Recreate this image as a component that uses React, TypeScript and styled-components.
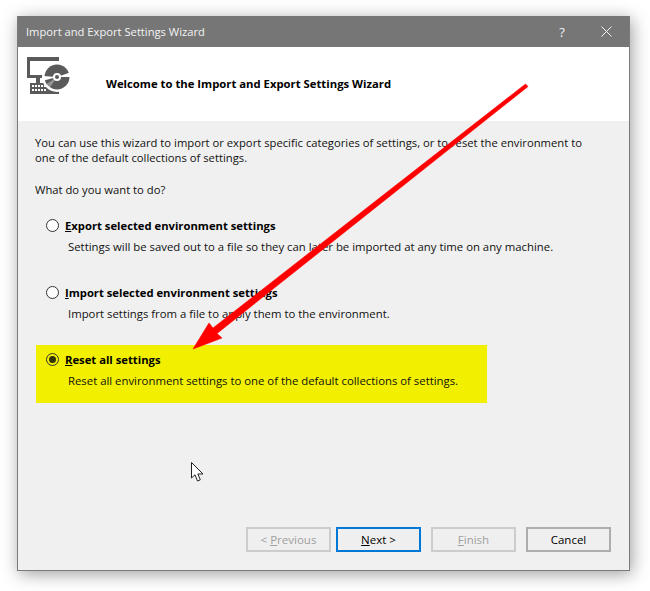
import styled, { createGlobalStyle } from "styled-components";

const GlobalStyle = createGlobalStyle`
  html, body {
    margin: 0;
    padding: 0;
    background: #ffffff;
  }
  body {
    font-family: "Open Sans", "Noto Sans", sans-serif;
    font-size: 11.25px;
    color: #111111;
  }
`;

const Page = styled.div`
  position: relative;
  width: 650px;
  height: 591px;
  padding: 16px 20px 20px 17px;
  box-sizing: border-box;
  overflow: hidden;
`;

const Window = styled.div`
  display: flex;
  flex-direction: column;
  height: 100%;
  box-sizing: border-box;
  border: 1px solid #7a7a7a;
  border-top: 0;
  background: #f0f0f0;
  box-shadow: 2px 3px 16px rgba(0, 0, 0, 0.38);
`;

const TitleBar = styled.div`
  display: flex;
  align-items: center;
  height: 31px;
  flex: none;
  padding: 0 17px 0 8px;
  background: #767676;
  color: #f4f4f4;
  font-size: 11.2px;
`;

const TitleText = styled.span`
  flex: 1;
`;

const HelpGlyph = styled.span`
  width: 12px;
  margin-right: 33px;
  font-size: 13px;
  text-align: center;
`;

const Header = styled.div`
  display: flex;
  align-items: flex-start;
  height: 74px;
  flex: none;
  padding: 10px 0 0 9px;
  box-sizing: border-box;
  background: #ffffff;
`;

const HeaderTitle = styled.h1`
  margin: 19px 0 0 35px;
  font-size: 11.3px;
  font-weight: 700;
  color: #000000;
`;

const Body = styled.div`
  display: flex;
  flex-direction: column;
  flex: 1;
  padding: 14px 18px 0 17px;
`;

const Paragraph = styled.p`
  margin: 0;
  line-height: 15px;
`;

const Question = styled(Paragraph)`
  margin: 17px 0 21px;
`;

const OptionList = styled.div`
  display: flex;
  flex-direction: column;
  gap: 30px;
  width: 451px;
`;

const Option = styled.div<{ $highlight?: boolean }>`
  display: grid;
  grid-template-columns: 13px 1fr;
  align-content: start;
  column-gap: 6px;
  row-gap: 5px;
  height: ${(p) => (p.$highlight ? "58px" : "auto")};
  box-sizing: border-box;
  margin: ${(p) => (p.$highlight ? "-7px -1px 0 1px" : "0 0 0 11px")};
  padding: ${(p) => (p.$highlight ? "7px 0 0 10px" : "0")};
  background: ${(p) => (p.$highlight ? "#f2f000" : "transparent")};
`;

const Radio = styled.span<{ $checked?: boolean; $tint?: boolean }>`
  display: flex;
  align-items: center;
  justify-content: center;
  width: 13px;
  height: 13px;
  margin-top: 1px;
  box-sizing: border-box;
  border: 1px solid #333333;
  border-radius: 50%;
  background: ${(p) => (p.$tint ? "transparent" : "#ffffff")};

  &::after {
    content: "";
    display: ${(p) => (p.$checked ? "block" : "none")};
    width: 7px;
    height: 7px;
    border-radius: 50%;
    background: #333300;
  }
`;

const OptionLabel = styled.label`
  font-weight: 700;
  line-height: 16px;
  color: #000000;
`;

const OptionText = styled.div`
  grid-column: 2;
  padding-left: 3px;
  font-size: 11.35px;
  line-height: 16px;
  white-space: nowrap;
`;

const Footer = styled.div`
  display: flex;
  justify-content: flex-end;
  flex: none;
  padding: 0 18px 18px 0;
`;

const WizardButton = styled.button<{ $focused?: boolean; $gap?: number }>`
  width: 85px;
  height: 25px;
  margin-left: ${(p) => p.$gap ?? 0}px;
  padding: 0;
  box-sizing: border-box;
  border: ${(p) => (p.$focused ? "2px solid #0078d7" : "2px solid #cccccc")};
  background: #efefef;
  font-family: inherit;
  font-size: 11.5px;
  color: #000000;

  &:disabled {
    color: #a0a0a0;
  }
`;

const CancelButton = styled(WizardButton)`
  border: 2px solid #adadad;
`;

const Arrow = styled.svg`
  position: absolute;
  left: 0;
  top: 0;
  pointer-events: none;
`;

const Cursor = styled.svg`
  position: absolute;
  left: 191px;
  top: 462px;
`;

const WizardIcon = () => (
  <svg width="44" height="38" viewBox="0 0 44 38">
    <path d="M0 0H32V4H3V18H22V21H0Z" fill="#5a5a5a" />
    <path d="M9 21H13V26H9Z" fill="#5a5a5a" />
    <path d="M3 26H32V37H3Z" fill="#5a5a5a" />
    <path
      d="M5 28h2v2H5zM8 28h2v2H8zM11 28h2v2h-2zM14 28h2v2h-2zM17 28h2v2h-2zM5 32h2v2H5zM8 32h2v2H8zM11 32h2v2h-2zM14 32h2v2h-2zM17 32h2v2h-2z"
      fill="#ffffff"
    />
    <circle cx="30" cy="20" r="15" fill="#ffffff" />
    <circle cx="30" cy="20" r="12.5" fill="#5a5a5a" />
    <path d="M30 20L16 19 17 23.5ZM30 20L44 20 43 15.5Z" fill="#ffffff" />
    <path d="M30 20L18 28 22 32Z" fill="#ffffff" opacity="0.35" />
    <circle cx="30" cy="20" r="4" fill="#ffffff" />
    <circle cx="30" cy="20" r="2" fill="#5a5a5a" />
  </svg>
);

export default function App() {
  return (
    <>
      <GlobalStyle />
      <Page>
        <Window>
          <TitleBar>
            <TitleText>Import and Export Settings Wizard</TitleText>
            <HelpGlyph>?</HelpGlyph>
            <svg width="11" height="11" viewBox="0 0 11 11">
              <path d="M0.5 0.5L10.5 10.5M10.5 0.5L0.5 10.5" stroke="#f4f4f4" strokeWidth="1" />
            </svg>
          </TitleBar>

          <Header>
            <WizardIcon />
            <HeaderTitle>Welcome to the Import and Export Settings Wizard</HeaderTitle>
          </Header>

          <Body>
            <Paragraph>
              You can use this wizard to import or export specific categories of settings, or to reset the environment to
              <br />
              one of the default collections of settings.
            </Paragraph>
            <Question>What do you want to do?</Question>

            <OptionList>
              <Option>
                <Radio />
                <OptionLabel>
                  <u>E</u>xport selected environment settings
                </OptionLabel>
                <OptionText>Settings will be saved out to a file so they can later be imported at any time on any machine.</OptionText>
              </Option>
              <Option>
                <Radio />
                <OptionLabel>
                  <u>I</u>mport selected environment settings
                </OptionLabel>
                <OptionText>Import settings from a file to apply them to the environment.</OptionText>
              </Option>
              <Option $highlight>
                <Radio $checked $tint />
                <OptionLabel>
                  <u>R</u>eset all settings
                </OptionLabel>
                <OptionText>Reset all environment settings to one of the default collections of settings.</OptionText>
              </Option>
            </OptionList>
          </Body>

          <Footer>
            <WizardButton disabled>
              &lt; <u>P</u>revious
            </WizardButton>
            <WizardButton $focused $gap={5}>
              <u>N</u>ext &gt;
            </WizardButton>
            <WizardButton disabled $gap={10}>
              <u>F</u>inish
            </WizardButton>
            <CancelButton $gap={10}>Cancel</CancelButton>
          </Footer>
        </Window>

        <Arrow width="650" height="591" viewBox="0 0 650 591">
          <path
            d="M528 86.5L217 333.5 222 338 193 349 209 323 213 328 525.5 84Z"
            fill="#ff0000"
            stroke="#ff0000"
            strokeWidth="0.6"
            strokeLinejoin="round"
          />
        </Arrow>

        <Cursor width="14" height="21" viewBox="0 0 14 21">
          <path d="M0.5 0.5V16L4 12.8 6.5 19 9.3 17.8 6.8 12H12Z" fill="#ffffff" stroke="#222222" strokeWidth="1" />
        </Cursor>
      </Page>
    </>
  );
}
